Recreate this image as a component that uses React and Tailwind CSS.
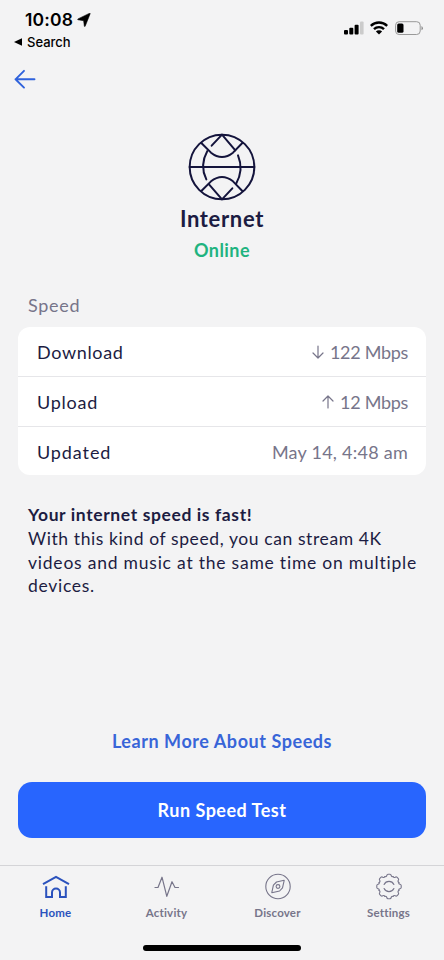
import React from 'react';

const stroke = { fill: 'none', stroke: 'currentColor', strokeLinecap: 'round', strokeLinejoin: 'round' };

function StatusBar() {
  return (
    <header className="flex h-[58px] justify-between font-['Inter',sans-serif] text-black">
      <div className="pt-[9px] pl-[14px]">
        <div className="flex h-[22px] items-center pl-[11px]">
          <span className="text-[17.5px] leading-[22px] font-semibold tracking-[0.2px]">10:08</span>
          <svg className="ml-[4px] h-[14px] w-[14px]" viewBox="0 0 14 14">
            <path d="M13.2.7 8.2 13.3q-.5.6-.9 0L6.6 7.7.9 6.8q-.6-.3 0-.9L12.6.2q.8-.2.6.5Z" fill="black" stroke="black" strokeWidth=".5" />
          </svg>
        </div>
        <div className="mt-[3px] flex h-4 items-center gap-[5px]">
          <svg className="h-2 w-2" viewBox="0 0 8 8"><path d="M0 4 8 .2v7.6Z" /></svg>
          <span className="text-[13px] leading-4 font-medium">Search</span>
        </div>
      </div>
      <div className="mt-[20px] flex h-[16px] items-center pr-[20px]">
        <svg className="h-4 w-5" viewBox="0 0 20 16">
          <rect x="0" y="10" width="4" height="4.6" rx="1" />
          <rect x="5.3" y="7.7" width="4" height="6.9" rx="1" />
          <rect x="10.6" y="4.8" width="4" height="9.8" rx="1" />
          <rect x="16" y="1.6" width="3.6" height="13" rx="1" fill="#cbcbcb" />
        </svg>
        <svg className="ml-[6px] h-4 w-[18px]" viewBox="0 0 18 16" fill="none" stroke="black" strokeWidth="2.4">
          <path d="M.8 5.8a11.7 11.7 0 0 1 16.4 0M4 9.2a7 7 0 0 1 10 0" />
          <path d="M9 10.2q2 0 3.1 1.2L9 14.5l-3.1-3.1Q7 10.2 9 10.2Z" fill="black" stroke="none" />
        </svg>
        <svg className="ml-[7px] h-4 w-[29px]" viewBox="0 0 29 16">
          <rect x=".6" y="1.7" width="24.6" height="12.8" rx="3.5" fill="none" stroke="#999" />
          <rect x="2.2" y="3.4" width="6.3" height="9.4" rx="1.5" />
          <path d="M26.5 6v4.3q1.4-.6 1.4-2.1T26.5 6Z" fill="#888" />
        </svg>
      </div>
    </header>
  );
}

function GlobeIcon() {
  return (
    <svg className="h-[68px] w-[68px] text-[#14143c]" viewBox="54 24 204 204" {...stroke} strokeWidth="6">
      <circle cx="156" cy="126" r="97" />
      <path d="M59 126h194M94 54l29 29q33 26 66 0l28-29M94 198l29-29q33-26 66 0l28 29" />
      <path d="M125 62l31-33 40 47M117 178l39 45 31-33M112 78q-24 43-3 85M204 91q18 43-6 86" />
    </svg>
  );
}

function SpeedArrow({ up }) {
  return (
    <svg className="mr-[6px] h-[14px] w-3" viewBox="0 0 12 14" {...stroke} strokeWidth="1.2">
      <path d={up ? 'M6 13V1M1 6l5-5 5 5' : 'M6 1v12M1 8l5 5 5-5'} />
    </svg>
  );
}

function Row({ label, labelClass, valueClass, children }) {
  return (
    <div className="flex h-[50px] items-center justify-between border-b border-[#e6e6e9] pr-[18px] pl-[19px] last:border-b-0">
      <span className={labelClass}>{label}</span>
      <span className={`flex items-center text-[#77758a] ${valueClass}`}>{children}</span>
    </div>
  );
}

function HomeIcon() {
  return (
    <svg className="h-7 w-7" viewBox="0 0 28 28" {...stroke} strokeWidth="2">
      <path d="M1 11.2 14 4l13 7.2M4.2 13.3V24H10v-4.5a4 4 0 0 1 8 0V24h5.8V13.3" strokeLinecap="butt" strokeLinejoin="miter" />
    </svg>
  );
}

function ActivityIcon() {
  return (
    <svg className="h-7 w-7" viewBox="0 0 28 28" {...stroke} strokeWidth="1.2">
      <path d="M2 14.5h3L9 4.2 13.8 23.3 19 8.7l3 5.8h3.5" />
    </svg>
  );
}

function DiscoverIcon() {
  return (
    <svg className="h-7 w-7" viewBox="0 0 28 28" {...stroke} strokeWidth="1.1">
      <circle cx="14" cy="13.5" r="12.2" />
      <circle cx="14" cy="13.5" r="1.9" />
      <path d="M20.2 7.3 18.5 14.8 15.6 18 7.8 19.7 9.4 12.2 12.5 9Z" />
    </svg>
  );
}

function SettingsIcon() {
  return (
    <svg className="h-7 w-7" viewBox="0 0 28 28" {...stroke} strokeWidth="1.1">
      {[0, 45, 90, 135, 180, 225, 270, 315].map((angle) => (
        <path key={angle} transform={`translate(0 -.5) rotate(${angle} 14 14)`} d="M9.9 4.1Q11.4 4.6 11.8 3 12.1 1.8 13 1.8h2q.9 0 1.2 1.2.4 1.6 1.9 1.1" />
      ))}
      <path d="M9.1 11.5a5.4 5.4 0 0 1 9.8 0M9.1 15.5a5.4 5.4 0 0 0 9.8 0" />
    </svg>
  );
}

function Tab({ icon, label, className }) {
  return (
    <div className={`flex w-[111px] flex-col items-center ${className}`}>
      {icon}
      <span className="mt-[4px] text-[11.5px] leading-4 font-bold tracking-[0.2px]">{label}</span>
    </div>
  );
}

export default function App() {
  return (
    <div className="flex h-[960px] w-[444px] flex-col overflow-hidden bg-[#f3f3f4] font-['Lato',sans-serif] text-[#1c1c42]">
      <StatusBar />
      <div className="h-[74px] pt-[11px] pl-[14px]">
        <svg className="h-5 w-[22px] text-[#2f62dc]" viewBox="0 0 22 20" {...stroke} strokeWidth="1.9">
          <path d="M20.5 10.3H1.5M10 1.8 1.5 10.3l8.5 8.3" />
        </svg>
      </div>
      <section className="flex flex-col items-center pt-[1px]">
        <GlobeIcon />
        <h1 className="mt-[4px] text-[22px] leading-7 font-bold tracking-[0.65px]">Internet</h1>
        <p className="mt-[5px] text-[18px] leading-6 font-bold tracking-[0.45px] text-[#1fb380]">Online</p>
      </section>
      <section className="mt-[31px] px-[18px]">
        <h2 className="pl-[10px] text-[18px] leading-6 tracking-[0.7px] text-[#77758a]">Speed</h2>
        <div className="mt-[10px] h-[148px] overflow-hidden rounded-[12px] bg-white text-[18px] leading-6">
          <Row label="Download" labelClass="tracking-[0.65px]" valueClass="tracking-[-0.3px]"><SpeedArrow />122 Mbps</Row>
          <Row label="Upload" labelClass="tracking-[0.75px]" valueClass="tracking-[-0.3px]"><SpeedArrow up />12 Mbps</Row>
          <Row label="Updated" labelClass="tracking-[0.9px]" valueClass="tracking-[0.25px]">May 14, 4:48 am</Row>
        </div>
      </section>
      <section className="mt-[28px] pl-[28px] text-[17.5px] leading-[23.8px] whitespace-nowrap">
        <p className="font-bold tracking-[0.61px]">Your internet speed is fast!</p>
        <p className="tracking-[0.6px]">With this kind of speed, you can stream 4K</p>
        <p className="tracking-[0.78px]">videos and music at the same time on multiple</p>
        <p className="tracking-[0.7px]">devices.</p>
      </section>
      <div className="mt-auto flex h-[136px] flex-col px-[18px] text-center text-[18px] leading-6 font-bold">
        <a className="tracking-[0.56px] text-[#3865d8]">Learn More About Speeds</a>
        <button className="mt-[29px] h-[56px] rounded-[14px] bg-[#2865fe] tracking-[0.5px] text-white">Run Speed Test</button>
      </div>
      <nav className="flex h-[95px] shrink-0 flex-col items-center border-t border-[#d4d4d7]">
        <div className="flex h-[79px] w-full pt-[7px] text-[#77758a]">
          <Tab icon={<HomeIcon />} label="Home" className="text-[#2b52bd]" />
          <Tab icon={<ActivityIcon />} label="Activity" className="" />
          <Tab icon={<DiscoverIcon />} label="Discover" className="" />
          <Tab icon={<SettingsIcon />} label="Settings" className="" />
        </div>
        <div className="h-[6px] w-[158px] rounded-full bg-black" />
      </nav>
    </div>
  );
}
